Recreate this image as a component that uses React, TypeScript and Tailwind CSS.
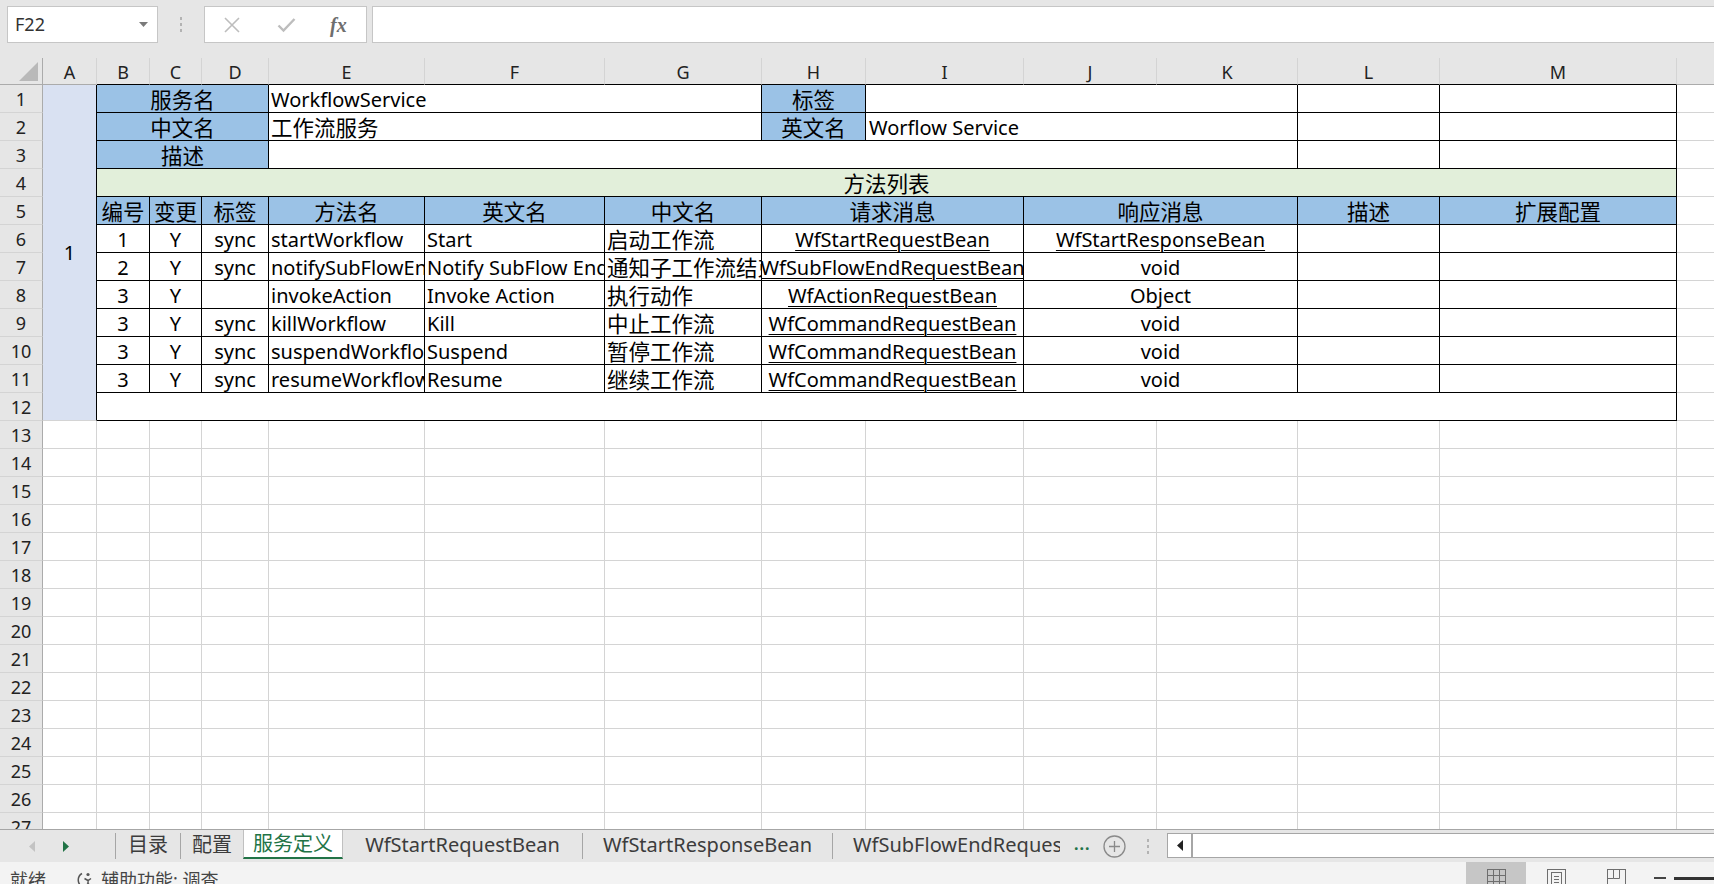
import React from "react";

const FONT = "font-['Noto_Sans','Noto_Sans_CJK_SC',sans-serif]";

function Cell({ c = "", children }: { c?: string; children?: React.ReactNode }) {
  return (
    <div className={"flex items-center pt-[3px] overflow-hidden whitespace-nowrap min-w-0 " + c}>
      {children !== undefined ? <span className="shrink-0">{children}</span> : null}
    </div>
  );
}

const TB = "border-r border-b border-black text-black";
const GR = "border-r border-b border-[#d4d4d4]";
const EX = "border-b border-[#d4d4d4]";
const BLUE = "bg-[#9bc2e6] justify-center text-[21.5px]";
const CEN = "justify-center text-[20px]";
const LEFT = "pl-[2px] text-[20px]";
const LEFTC = "pl-[2px] text-[21.5px]";
const LINK = "text-[#0563c1] underline decoration-1 underline-offset-[3px]";

function RH({ n }: { n: number }) {
  return (
    <div className="flex items-center justify-center pt-[2px] bg-[#e6e6e6] border-r border-r-[#ababab] border-b border-b-[#d4d4d4] text-[18px] text-[#222] overflow-hidden">
      {n}
    </div>
  );
}

function ColHead({ l, black }: { l: string; black?: boolean }) {
  return (
    <div
      className={
        "flex items-center justify-center pt-[3px] bg-[#e6e6e6] border-r border-r-[#d4d4d4] border-b text-[18px] text-[#222] " +
        (black ? "border-b-black" : "border-b-[#ababab]")
      }
    >
      {l}
    </div>
  );
}

type Row = {
  n: number;
  b: string;
  c: string;
  d: string;
  e: string;
  f: string;
  g: string;
  req: string;
  res: string;
  resLink: boolean;
};

const rows: Row[] = [
  { n: 6, b: "1", c: "Y", d: "sync", e: "startWorkflow", f: "Start", g: "启动工作流", req: "WfStartRequestBean", res: "WfStartResponseBean", resLink: true },
  { n: 7, b: "2", c: "Y", d: "sync", e: "notifySubFlowEnd", f: "Notify SubFlow End", g: "通知子工作流结束", req: "WfSubFlowEndRequestBean", res: "void", resLink: false },
  { n: 8, b: "3", c: "Y", d: "", e: "invokeAction", f: "Invoke Action", g: "执行动作", req: "WfActionRequestBean", res: "Object", resLink: false },
  { n: 9, b: "3", c: "Y", d: "sync", e: "killWorkflow", f: "Kill", g: "中止工作流", req: "WfCommandRequestBean", res: "void", resLink: false },
  { n: 10, b: "3", c: "Y", d: "sync", e: "suspendWorkflow", f: "Suspend", g: "暂停工作流", req: "WfCommandRequestBean", res: "void", resLink: false },
  { n: 11, b: "3", c: "Y", d: "sync", e: "resumeWorkflow", f: "Resume", g: "继续工作流", req: "WfCommandRequestBean", res: "void", resLink: false },
];

const emptyRows = [13, 14, 15, 16, 17, 18, 19, 20, 21, 22, 23, 24, 25, 26, 27];
const letters = ["A", "B", "C", "D", "E", "F", "G", "H", "I", "J", "K", "L", "M"];

function Sheet() {
  return (
    <div className="h-[771px] overflow-hidden bg-white">
      <div className="grid grid-cols-[43px_54px_53px_52px_67px_156px_180px_157px_104px_158px_133px_141px_142px_237px_1fr] grid-rows-[27px_repeat(27,28px)]">
        {/* header */}
        <div className="relative bg-[#e6e6e6] border-r border-r-[#ababab] border-b border-b-[#ababab]">
          <svg className="absolute right-[4px] bottom-[3px]" width="19" height="19" viewBox="0 0 19 19">
            <path d="M19 0V19H0Z" fill="#b9b9b9" />
          </svg>
        </div>
        {letters.map((l) => (
          <ColHead key={l} l={l} black={l !== "A"} />
        ))}
        <div className="bg-[#e6e6e6] border-b border-b-[#ababab]" />

        {/* row 1 */}
        <RH n={1} />
        <div className="row-span-12 flex items-center justify-center bg-[#d9e1f2] border-r border-r-black border-b border-b-[#d4d4d4] text-[20px] text-black">
          1
        </div>
        <Cell c={TB + " col-span-3 " + BLUE}>服务名</Cell>
        <Cell c={TB + " col-span-3 " + LEFT}>WorkflowService</Cell>
        <Cell c={TB + " " + BLUE}>标签</Cell>
        <Cell c={TB + " col-span-3"} />
        <Cell c={TB} />
        <Cell c={TB} />
        <Cell c={EX} />

        {/* row 2 */}
        <RH n={2} />
        <Cell c={TB + " col-span-3 " + BLUE}>中文名</Cell>
        <Cell c={TB + " col-span-3 " + LEFTC}>工作流服务</Cell>
        <Cell c={TB + " " + BLUE}>英文名</Cell>
        <Cell c={TB + " col-span-3 pl-[3px] text-[20px]"}>Worflow Service</Cell>
        <Cell c={TB} />
        <Cell c={TB} />
        <Cell c={EX} />

        {/* row 3 */}
        <RH n={3} />
        <Cell c={TB + " col-span-3 " + BLUE}>描述</Cell>
        <Cell c={TB + " col-span-7"} />
        <Cell c={TB} />
        <Cell c={TB} />
        <Cell c={EX} />

        {/* row 4 */}
        <RH n={4} />
        <Cell c={TB + " col-span-12 bg-[#e2efda] justify-center text-[21.5px]"}>方法列表</Cell>
        <Cell c={EX} />

        {/* row 5 */}
        <RH n={5} />
        <Cell c={TB + " " + BLUE}>编号</Cell>
        <Cell c={TB + " " + BLUE}>变更</Cell>
        <Cell c={TB + " " + BLUE}>标签</Cell>
        <Cell c={TB + " " + BLUE}>方法名</Cell>
        <Cell c={TB + " " + BLUE}>英文名</Cell>
        <Cell c={TB + " " + BLUE}>中文名</Cell>
        <Cell c={TB + " col-span-2 " + BLUE}>请求消息</Cell>
        <Cell c={TB + " col-span-2 " + BLUE}>响应消息</Cell>
        <Cell c={TB + " " + BLUE}>描述</Cell>
        <Cell c={TB + " " + BLUE}>扩展配置</Cell>
        <Cell c={EX} />

        {rows.map((r) => (
          <React.Fragment key={r.n}>
            <RH n={r.n} />
            <Cell c={TB + " " + CEN}>{r.b}</Cell>
            <Cell c={TB + " " + CEN}>{r.c}</Cell>
            <Cell c={TB + " " + CEN}>{r.d || undefined}</Cell>
            <Cell c={TB + " " + LEFT}>{r.e}</Cell>
            <Cell c={TB + " " + LEFT}>{r.f}</Cell>
            <Cell c={TB + " " + LEFTC}>{r.g}</Cell>
            <Cell c={TB + " col-span-2 " + CEN + " " + LINK}>{r.req}</Cell>
            <Cell c={TB + " col-span-2 " + CEN + (r.resLink ? " " + LINK : "")}>{r.res}</Cell>
            <Cell c={TB} />
            <Cell c={TB} />
            <Cell c={EX} />
          </React.Fragment>
        ))}

        {/* row 12 */}
        <RH n={12} />
        <Cell c={TB + " col-span-12"} />
        <Cell c={EX} />

        {emptyRows.map((n) => (
          <React.Fragment key={n}>
            <RH n={n} />
            {letters.map((l) => (
              <div key={l} className={GR} />
            ))}
            <div className={EX} />
          </React.Fragment>
        ))}
      </div>
    </div>
  );
}

function TopBar() {
  return (
    <div className="h-[58px] bg-[#e6e6e6] flex items-start pt-[6px]">
      <div className="ml-[7px] w-[151px] h-[37px] bg-white border border-[#c6c6c6] flex items-center pl-[7px] pr-[9px] text-[18px] text-[#333]">
        <span>F22</span>
        <svg className="ml-auto" width="9" height="5" viewBox="0 0 9 5">
          <path d="M0 0H9L4.5 5Z" fill="#7a7a7a" />
        </svg>
      </div>
      <div className="w-[46px] h-[37px] flex items-center justify-center">
        <svg width="4" height="15" viewBox="0 0 4 15">
          <rect x="1" y="0" width="2" height="3" fill="#b3b3b3" />
          <rect x="1" y="6" width="2" height="3" fill="#b3b3b3" />
          <rect x="1" y="12" width="2" height="3" fill="#b3b3b3" />
        </svg>
      </div>
      <div className="w-[163px] h-[37px] bg-white border border-[#c6c6c6] flex items-center">
        <svg className="ml-[18px]" width="18" height="18" viewBox="0 0 18 18">
          <path d="M2 2L16 16M16 2L2 16" stroke="#bdbdbd" strokeWidth="1.6" fill="none" />
        </svg>
        <svg className="ml-[36px]" width="19" height="16" viewBox="0 0 19 16">
          <path d="M1.5 8.5L6.5 13.5L17.5 2" stroke="#bdbdbd" strokeWidth="2.4" fill="none" />
        </svg>
        <span className="ml-[34px] font-['Liberation_Serif',serif] italic font-bold text-[20px] text-[#6e6e6e] leading-none">
          fx
        </span>
      </div>
      <div className="ml-[5px] flex-1 h-[37px] bg-white border border-[#c6c6c6] border-r-0" />
    </div>
  );
}

function Sep() {
  return <div className="w-px bg-[#a6a6a6] my-[3px]" />;
}

function TabBar() {
  return (
    <div className="h-[33px] bg-[#e6e6e6] border-t border-[#a6a6a6] flex items-stretch text-[20px] text-[#3c3c3c]">
      <div className="w-[115px] flex items-center">
        <svg className="ml-[29px]" width="6" height="11" viewBox="0 0 6 11">
          <path d="M6 0V11L0 5.5Z" fill="#c3c3c3" />
        </svg>
        <svg className="ml-[28px]" width="6" height="11" viewBox="0 0 6 11">
          <path d="M0 0V11L6 5.5Z" fill="#217346" />
        </svg>
      </div>
      <Sep />
      <div className="w-[64px] flex items-center justify-center pb-[2px]">目录</div>
      <Sep />
      <div className="w-[62px] flex items-center justify-center pb-[2px]">配置</div>
      <div className="w-[100px] mb-[3px] bg-white border-l border-r border-[#c0c0c0] border-b-2 border-b-[#217346] flex items-center justify-center text-[#217346]">
        服务定义
      </div>
      <div className="w-[239px] flex items-center justify-center pb-[2px]">WfStartRequestBean</div>
      <Sep />
      <div className="w-[249px] flex items-center justify-center pb-[2px]">WfStartResponseBean</div>
      <Sep />
      <div className="w-[227px] flex items-center overflow-hidden whitespace-nowrap pl-[20px] pb-[2px]">
        <span className="shrink-0">WfSubFlowEndRequestBean</span>
      </div>
      <div className="w-[107px] flex items-center">
        <span className="ml-[14px] text-[#217346] font-bold text-[16px] tracking-[1px] pb-[4px]">...</span>
        <svg className="ml-[12px]" width="23" height="23" viewBox="0 0 23 23">
          <circle cx="11.5" cy="11.5" r="10.5" stroke="#8a8a8a" strokeWidth="1.3" fill="none" />
          <path d="M11.5 6V17M6 11.5H17" stroke="#8a8a8a" strokeWidth="1.3" />
        </svg>
        <svg className="ml-[20px]" width="4" height="15" viewBox="0 0 4 15">
          <rect x="1" y="0" width="2" height="3" fill="#b3b3b3" />
          <rect x="1" y="6" width="2" height="3" fill="#b3b3b3" />
          <rect x="1" y="12" width="2" height="3" fill="#b3b3b3" />
        </svg>
      </div>
      <div className="flex-1 flex items-start pt-[3px]">
        <div className="flex-1 h-[25px] flex border border-[#a6a6a6] border-r-0 bg-white">
          <div className="w-[23px] flex items-center justify-center">
            <svg width="6" height="11" viewBox="0 0 6 11">
              <path d="M6 0V11L0 5.5Z" fill="#222" />
            </svg>
          </div>
          <div className="w-[2px] bg-[#a6a6a6]" />
          <div className="flex-1 bg-white" />
        </div>
      </div>
    </div>
  );
}

function StatusBar() {
  return (
    <div className="h-[36px] bg-[#f3f3f3] flex items-stretch text-[18px] text-[#444]">
      <div className="flex items-center pl-[10px]">就绪</div>
      <div className="flex items-center ml-[31px]">
        <svg width="18" height="18" viewBox="0 0 18 18">
          <path d="M5 2.5A7.5 7.5 0 0 0 5 15.5" stroke="#555" strokeWidth="1.5" fill="none" />
          <circle cx="11" cy="3.5" r="1.6" fill="#555" />
          <path d="M7.5 7.5L11 9.5L14 7.5M11 9.5V12.5L8.5 15.5M11 12.5L14 15.5" stroke="#555" strokeWidth="1.5" fill="none" />
        </svg>
        <span className="ml-[6px]">辅助功能: 调查</span>
      </div>
      <div className="flex-1" />
      <div className="w-[60px] bg-[#c6c6c6] flex justify-center pt-[7px]">
        <svg width="19" height="19" viewBox="0 0 19 19">
          <rect x="0.5" y="0.5" width="18" height="18" fill="none" stroke="#6e6e6e" />
          <path d="M6.5 0.5V18.5M12.5 0.5V18.5M0.5 6.5H18.5M0.5 12.5H18.5" stroke="#6e6e6e" />
        </svg>
      </div>
      <div className="w-[60px] flex justify-center pt-[7px]">
        <svg width="19" height="19" viewBox="0 0 19 19">
          <rect x="0.5" y="0.5" width="18" height="18" fill="none" stroke="#6e6e6e" />
          <rect x="4.5" y="3.5" width="10" height="15" fill="none" stroke="#6e6e6e" />
          <path d="M7 7.5H12M7 10.5H12M7 13.5H12" stroke="#6e6e6e" />
        </svg>
      </div>
      <div className="w-[60px] flex justify-center pt-[7px]">
        <svg width="19" height="19" viewBox="0 0 19 19">
          <rect x="0.5" y="0.5" width="18" height="18" fill="none" stroke="#6e6e6e" />
          <path d="M6.5 0.5V9.5H12.5V0.5M0.5 9.5H6.5" stroke="#6e6e6e" fill="none" />
        </svg>
      </div>
      <div className="w-[68px] flex items-start pt-[15px]">
        <div className="ml-[8px] w-[12px] h-[2px] bg-[#444]" />
        <div className="ml-[8px] flex-1 h-[3px] bg-[#333]" />
      </div>
    </div>
  );
}

export default function App() {
  return (
    <div className={"w-[1714px] h-[884px] overflow-hidden bg-[#e6e6e6] " + FONT}>
      <TopBar />
      <Sheet />
      <TabBar />
      <StatusBar />
    </div>
  );
}
